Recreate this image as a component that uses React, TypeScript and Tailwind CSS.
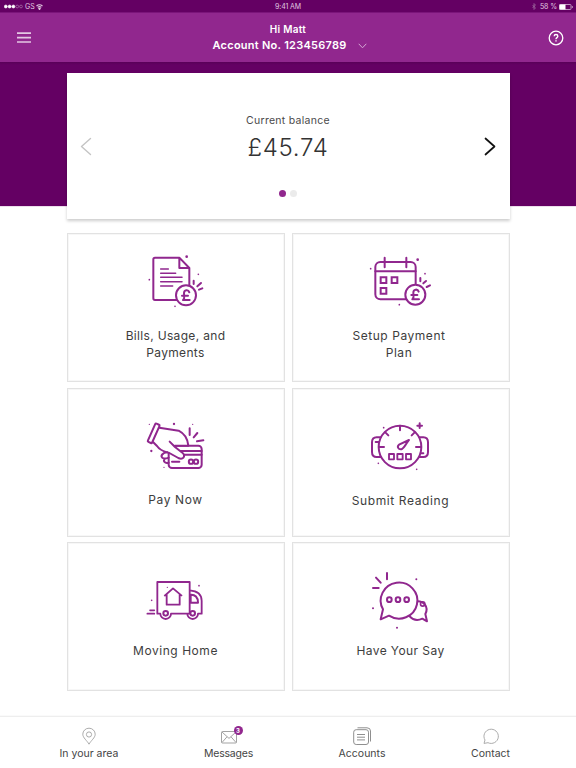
import React from 'react'

interface Tile {
    label: string
    icon: React.ReactNode
    className: string
    labelClassName: string
}

function TileIcon({ children }: { children: React.ReactNode }) {
    return (
        <svg
            className="w-[74px] h-[70px] shrink-0"
            viewBox="12 0 222 210"
            fill="none"
            stroke="#90278e"
            strokeWidth="6"
            strokeLinecap="round"
            strokeLinejoin="round"
        >
            {children}
        </svg>
    )
}

function PoundBadge({ x, y }: { x: number; y: number }) {
    return (
        <g transform={`translate(${x} ${y})`}>
            <circle r="30" fill="#fff" />
            <path d="M10 -9C7 -18 -6 -17 -6 -6C-6 3 -2 8 -9 14H11M-12 1H6" />
        </g>
    )
}

function BillIcon() {
    return (
        <TileIcon>
            <path d="M133 38H60Q55 38 55 43V160Q55 165 60 165H155Q163 165 163 157V69ZM133 38V69H163" />
            <path d="M77 72H100M77 85H122M77 97H141M77 110H141M77 123H113" strokeWidth="4.5" />
            <PoundBadge x={153} y={151} />
            <path d="M176 107V117M187 124L198 114M192 134L202 130" />
            <g fill="#90278e" stroke="none">
                <circle cx="155" cy="35" r="4" />
                <circle cx="43" cy="104" r="2.5" />
                <circle cx="190" cy="88" r="2.5" />
                <circle cx="120" cy="184" r="2.5" />
            </g>
        </TileIcon>
    )
}

function CalendarIcon() {
    return (
        <TileIcon>
            <rect x="46" y="51" width="121" height="112" rx="15" />
            <path d="M46 79H167M74 38V67M139 38V67" />
            <path d="M62 97H79V114H62ZM95 97H112V114H95ZM62 129H79V146H62Z" strokeLinejoin="miter" />
            <PoundBadge x={166} y={149} />
            <path d="M181 99V109M190 115L198 108M200 126L210 121" />
            <g fill="#90278e" stroke="none">
                <circle cx="173" cy="44" r="4" />
                <circle cx="32" cy="71" r="2.5" />
                <circle cx="195" cy="86" r="2.5" />
                <circle cx="118" cy="179" r="2.5" />
            </g>
        </TileIcon>
    )
}

function PayIcon() {
    return (
        <TileIcon>
            <rect x="101" y="107" width="99" height="67" rx="10" />
            <path d="M134 123H200M144 134H200M111 155H133" />
            <circle cx="168" cy="155" r="6.5" />
            <circle cx="183" cy="155" r="6.5" />
            <path
                d="M75 52L131 62Q157 75 160 107H121L104 95L120 111L142 128C155 141 143 150 130 144L103 129C90 124 75 121 64 105L54 96Z"
                fill="#fff"
                stroke="none"
            />
            <path d="M73 53L131 62Q157 75 160 107M104 95L120 111L142 128C154 140 143 150 130 144L103 129C89 124 77 124 66 108L54 96M120 107H160" />
            <path d="M97 127C82 128 76 138 82 143C88 148 95 145 101 143M90 146C83 153 89 161 101 158" />
            <rect x="-7" y="-30" width="14" height="60" rx="3" transform="translate(56 70) rotate(24)" fill="#fff" />
            <path d="M164 55V75M187 69L176 82M205 91L186 94" />
            <g fill="#90278e" stroke="none">
                <circle cx="117" cy="42" r="3.5" />
                <circle cx="49" cy="123" r="3.5" />
                <circle cx="43" cy="43" r="2" />
                <circle cx="173" cy="43" r="2" />
                <circle cx="87" cy="172" r="2" />
            </g>
        </TileIcon>
    )
}

function MeterIcon() {
    return (
        <TileIcon>
            <path d="M65 82H50Q36 82 36 97V126Q36 141 50 141H65M175 82H190Q204 82 204 97V126Q204 141 190 141H175M47 96H57M183 130H190" />
            <circle cx="120" cy="111" r="64" fill="#fff" />
            <path d="M120 47V61M76 67L85 76M164 67L155 76M58 111H72M182 111H168" />
            <path d="M147 90L117 104C110 110 115 119 124 118C130 116 131 112 147 90Z" />
            <path d="M87 132H102V148H87ZM112 132H128V148H112ZM138 132H153V148H138Z" strokeWidth="5.5" />
            <path d="M179 40V54M172 47H186" />
            <g fill="#90278e" stroke="none">
                <circle cx="71" cy="53" r="2.5" />
                <circle cx="55" cy="160" r="2.5" />
                <circle cx="170" cy="178" r="2.5" />
            </g>
        </TileIcon>
    )
}

function VanIcon() {
    return (
        <TileIcon>
            <path d="M76 146H67V51H164V146H108M76 146A16 16 0 0 0 108 146M164 76Q200 79 200 107V146H189M157 146A16 16 0 0 0 189 146" strokeWidth="5.5" />
            <circle cx="92" cy="145" r="7" />
            <circle cx="173" cy="145" r="7" />
            <path d="M167 89C180 88 189 97 189 113H167Z" />
            <path d="M90 91L114 70L139 91M95 88V119H134V88" strokeWidth="5.5" strokeLinecap="square" />
            <path d="M37 146H58M45 136H58" strokeWidth="5" />
            <g fill="#90278e" stroke="none">
                <circle cx="97" cy="67" r="2" />
                <circle cx="50" cy="106" r="2.5" />
                <circle cx="192" cy="62" r="2.5" />
            </g>
        </TileIcon>
    )
}

function ChatIcon() {
    return (
        <TileIcon>
            <path d="M166 109C192 105 207 126 196 147L201 169L187 161C172 168 158 164 149 154" />
            <circle cx="188" cy="117" r="6.5" strokeWidth="5" />
            <path d="M69 133A55 54 0 1 1 87 152L62 163Z" fill="#fff" />
            <circle cx="88" cy="104" r="7" />
            <circle cx="114" cy="104" r="7" />
            <circle cx="140" cy="104" r="7" />
            <path d="M81 24V43M48 38L62 53M39 69H56" />
            <g fill="#90278e" stroke="none">
                <circle cx="169" cy="43" r="3" />
                <circle cx="39" cy="130" r="3" />
                <circle cx="111" cy="188" r="3" />
            </g>
        </TileIcon>
    )
}

const tiles: Tile[] = [
    { label: 'Bills, Usage, and Payments', icon: <BillIcon />, className: 'pt-[11px]', labelClassName: 'mt-3 w-[116px] tracking-[0.33px]' },
    { label: 'Setup Payment Plan', icon: <CalendarIcon />, className: 'pt-[11px]', labelClassName: 'mt-3 w-[116px] -ml-[3px] tracking-[0.55px]' },
    { label: 'Pay Now', icon: <PayIcon />, className: 'pt-[21.5px]', labelClassName: 'mt-[11px] tracking-[0.6px]' },
    { label: 'Submit Reading', icon: <MeterIcon />, className: 'pt-[21.5px]', labelClassName: 'mt-[11.5px] tracking-[0.6px]' },
    { label: 'Moving Home', icon: <VanIcon />, className: 'pt-[22px]', labelClassName: 'mt-[6.5px] tracking-[0.55px]' },
    { label: 'Have Your Say', icon: <ChatIcon />, className: 'pt-[22px]', labelClassName: 'mt-[6.5px] tracking-[0.42px]' },
]

function StatusBar() {
    return (
        <div className="h-3 pt-px px-1 grid grid-cols-3 items-center bg-[#640063] text-[7px] leading-[11px] text-[#e0c8e0]">
            <div className="flex items-center gap-[2px]">
                <svg className="w-[19px] h-[5px]" viewBox="0 0 19 5" stroke="#fff" strokeWidth="0.6">
                    <circle cx="1.8" cy="2.5" r="1.5" fill="#fff" />
                    <circle cx="5.6" cy="2.5" r="1.5" fill="#fff" />
                    <circle cx="9.4" cy="2.5" r="1.5" fill="#fff" />
                    <circle cx="13.2" cy="2.5" r="1.4" fill="none" stroke="#b98ab9" />
                    <circle cx="17" cy="2.5" r="1.4" fill="none" stroke="#b98ab9" />
                </svg>
                <span>GS</span>
                <svg className="w-[7px] h-[6px] -ml-px" viewBox="0 0 14 12" fill="none" stroke="#e0c8e0" strokeWidth="2.2">
                    <path d="M1 4Q7 -1 13 4M3.3 6.8Q7 3.5 10.7 6.8M5.5 9.2Q7 8 8.5 9.2L7 11Z" />
                </svg>
            </div>
            <span className="text-center tracking-[-0.1px]">9:41 AM</span>
            <div className="flex items-center justify-end">
                <svg className="w-1 h-[7px] mr-1" viewBox="0 0 8 14" fill="none" stroke="#a878a8" strokeWidth="1.3">
                    <path d="M1 4L7 10L4 13V1L7 4L1 10" />
                </svg>
                <span className="mr-[2px] tracking-[-0.1px]">58 %</span>
                <svg className="w-[14px] h-[6px] -mr-px" viewBox="0 0 14 6">
                    <rect x="0.5" y="0.5" width="11.5" height="5" rx="0.7" fill="none" stroke="#d6b8d6" strokeWidth="0.8" />
                    <rect x="0.5" y="0.5" width="6" height="5" fill="#fff" />
                    <path d="M13.3 2V4" stroke="#d6b8d6" strokeWidth="0.8" />
                </svg>
            </div>
        </div>
    )
}

function Header() {
    return (
        <header className="h-[50px] pl-[17px] pr-[12px] flex items-center justify-between bg-[#91278e] border-t border-[#7b157a] text-white">
            <svg className="w-[14px] h-[11px]" viewBox="0 0 14 11" stroke="#e3c8e3" strokeWidth="1.7">
                <path d="M0 1.2H14M0 5.6H14M0 10H14" />
            </svg>
            <div className="text-center font-semibold">
                <p className="-ml-[3px] text-[10px] leading-[16px] tracking-[0.3px]">Hi Matt</p>
                <div className="flex items-center text-[11px] leading-[17px]">
                    <span className="tracking-[0.26px]">Account No. 123456789</span>
                    <svg className="ml-[11px] w-[9px] h-[6px]" viewBox="0 0 9 6" fill="none" stroke="#d5a9d4" strokeWidth="1">
                        <path d="M0.7 0.8L4.5 4.8L8.3 0.8" />
                    </svg>
                </div>
            </div>
            <svg className="w-4 h-4" viewBox="0 0 16 16" fill="none" stroke="#fff" strokeWidth="1.3">
                <circle cx="8" cy="8" r="6.8" />
                <path d="M6.2 6.2C6.2 4 9.8 4 9.8 6.2C9.8 7.7 8 7.6 8 9.2M8 10.3V11.6" strokeWidth="1.4" />
            </svg>
        </header>
    )
}

function BalanceCard() {
    return (
        <section className="mx-auto w-[443px] h-[146px] bg-white shadow-[0_2px_3px_rgba(0,0,0,0.2)] flex items-center justify-between px-[13px]">
            <svg className="w-3 h-[19px] mt-px" viewBox="0 0 12 18" fill="none" stroke="#c4c4c4" strokeWidth="1.4" strokeLinecap="round" strokeLinejoin="round">
                <path d="M10.5 1L1.5 9L10.5 17" />
            </svg>
            <div className="pt-[18px] flex flex-col items-center text-[#333]">
                <p className="text-[10.5px] leading-4 tracking-[0.28px] text-[#4a4a4a]">Current balance</p>
                <p className="mt-[4px] text-[24px] leading-[30px] font-light tracking-[0.7px]">£45.74</p>
                <div className="mt-[27px] flex gap-1">
                    <span className="w-[7px] h-[7px] rounded-full bg-[#91278e]" />
                    <span className="w-[7px] h-[7px] rounded-full bg-[#ebebeb]" />
                </div>
            </div>
            <svg className="w-3 h-[19px] mt-px" viewBox="0 0 12 18" fill="none" stroke="#111" strokeWidth="1.7" strokeLinecap="round" strokeLinejoin="round">
                <path d="M1.5 1L10.5 9L1.5 17" />
            </svg>
        </section>
    )
}

function NavBar() {
    return (
        <nav className="h-[52px] pt-[10px] pl-[59.5px] pr-[66px] flex justify-between border-t border-[#eeeeee] shadow-[0_-1px_1px_rgba(0,0,0,0.02)] text-[10.5px] leading-[15px] text-[#444]">
            <div className="flex flex-col items-center">
                <svg className="w-[18px] h-[19px]" viewBox="0 0 18 19" fill="none" stroke="#a3a3a3" strokeWidth="0.9">
                    <path d="M9 17.2C7 13.5 2.8 10.8 2.8 7.2A6.2 6 0 0 1 15.2 7.2C15.2 10.8 11 13.5 9 17.2Z" />
                    <circle cx="9" cy="7.5" r="2.6" />
                </svg>
                <span>In your area</span>
            </div>
            <div className="flex flex-col items-center">
                <div className="relative">
                    <svg className="w-[18px] h-[19px]" viewBox="0 0 18 19" fill="none" stroke="#999" strokeWidth="0.9">
                        <rect x="1.5" y="4.5" width="15" height="11.5" rx="1" />
                        <path d="M2 5L9 11.4L16 5M2 15.5L7 9.8M16 15.5L11 9.8" />
                    </svg>
                    <span className="absolute -top-[1px] left-[14px] w-[9px] h-[9px] rounded-full bg-[#91278e] text-white text-[6px] leading-[9px] font-bold text-center">3</span>
                </div>
                <span className="tracking-[-0.2px]">Messages</span>
            </div>
            <div className="flex flex-col items-center">
                <svg className="w-[18px] h-[19px]" viewBox="0 0 18 19" fill="none" stroke="#8f8f8f" strokeWidth="1">
                    <rect x="0.7" y="2.7" width="14.8" height="14.8" rx="2.5" />
                    <path d="M4 7.5H12M4 10.2H12M4 12.9H12M4.5 0.8H14Q17.5 0.8 17.5 4V14.5" />
                </svg>
                <span>Accounts</span>
            </div>
            <div className="flex flex-col items-center">
                <svg className="w-[18px] h-[19px]" viewBox="0 0 18 19" fill="none" stroke="#a3a3a3" strokeWidth="0.9">
                    <path d="M3 13A7.2 7.1 0 1 1 6 15.7L2 16.4Z" />
                </svg>
                <span>Contact</span>
            </div>
        </nav>
    )
}

export default function App() {
    return (
        <div className="w-[576px] h-[768px] overflow-hidden flex flex-col bg-white font-['Inter','Liberation_Sans',sans-serif]">
            <StatusBar />
            <Header />

            {/* Balance carousel straddles the dark band */}
            <div className="h-[171px] shrink-0 pt-[11px] bg-[linear-gradient(to_bottom,#590058_0px,#640063_3px,#640063_144px,#dabfd9_144px,#ffffff_145px)]">
                <BalanceCard />
            </div>

            <main className="mx-auto w-[443px] h-[458px] shrink-0 grid grid-cols-2 grid-rows-3 gap-x-[7px] gap-y-[5.5px]">
                {tiles.map(tile => (
                    <button
                        key={tile.label}
                        className={`border border-[#e2e2e2] shadow-[inset_0_0_0_1px_#f7f7f7] flex flex-col items-center justify-start text-[#3d3d3d] ${tile.className}`}
                    >
                        {tile.icon}
                        <span className={`text-[12px] leading-[17px] ${tile.labelClassName}`}>{tile.label}</span>
                    </button>
                ))}
            </main>

            <div className="flex-1" />
            <NavBar />
        </div>
    )
}
